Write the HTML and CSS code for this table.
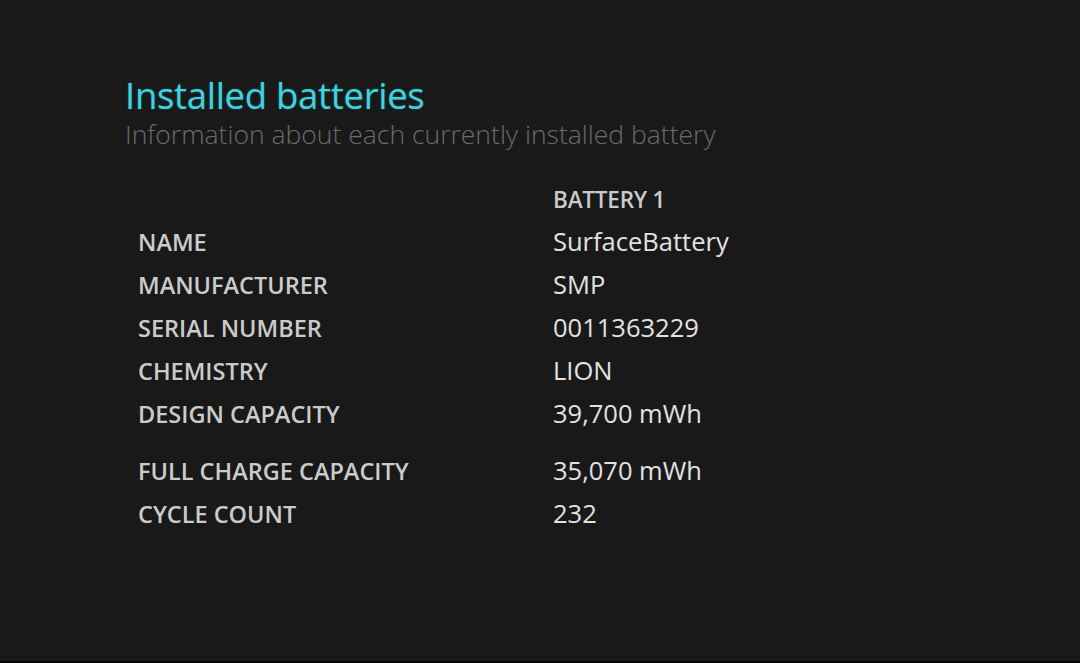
FILE: index.html
```html
<!DOCTYPE html>
<html>
<head>
<meta charset="utf-8">
<link rel="stylesheet" href="styles.css">
</head>
<body>
<main class="page">
  <h1 class="title">Installed batteries</h1>
  <p class="subtitle">Information about each currently installed battery</p>
  <div class="table">
    <div class="row head"><span class="label"></span><span class="col-head">BATTERY 1</span></div>
    <div class="row"><span class="label">NAME</span><span class="value">SurfaceBattery</span></div>
    <div class="row"><span class="label">MANUFACTURER</span><span class="value">SMP</span></div>
    <div class="row"><span class="label">SERIAL NUMBER</span><span class="value">0011363229</span></div>
    <div class="row"><span class="label">CHEMISTRY</span><span class="value">LION</span></div>
    <div class="row"><span class="label">DESIGN CAPACITY</span><span class="value">39,700 mWh</span></div>
    <div class="row spaced"><span class="label">FULL CHARGE CAPACITY</span><span class="value">35,070 mWh</span></div>
    <div class="row"><span class="label">CYCLE COUNT</span><span class="value">232</span></div>
  </div>
</main>
</body>
</html>
```
FILE: styles.css
```css
html, body {
  margin: 0;
  padding: 0;
  height: 100%;
}
body {
  background: #191919;
  border-bottom: 2px solid #050505;
  box-sizing: border-box;
  font-family: "Open Sans", "Noto Sans", sans-serif;
}
.page {
  padding: 74px 0 0 125px;
}
.title {
  margin: 0;
  font-size: 36.5px;
  font-weight: 500;
  color: #3fd3e0;
  line-height: 42px;
  letter-spacing: -0.3px;
  text-shadow: 0 0 2px rgba(63, 211, 224, 0.35);
}
.subtitle {
  margin: 0;
  font-size: 26.5px;
  font-weight: 300;
  color: #6b6b6b;
  line-height: 36px;
}
.table {
  margin-top: 28px;
  padding-left: 13px;
  display: flex;
  flex-direction: column;
}
.row {
  display: flex;
  align-items: baseline;
  height: 43px;
  line-height: 43px;
}
.row.head {
  height: 40px;
  line-height: 40px;
}
.row.spaced {
  margin-top: 14px;
}
.label {
  width: 415px;
  flex: none;
  font-size: 23.5px;
  font-weight: 600;
  color: #cbcbcb;
}
.col-head {
  font-size: 22.5px;
  font-weight: 600;
  color: #cbcbcb;
  letter-spacing: -0.2px;
}
.value {
  font-size: 25.5px;
  font-weight: 400;
  color: #e2e2e2;
}
```
